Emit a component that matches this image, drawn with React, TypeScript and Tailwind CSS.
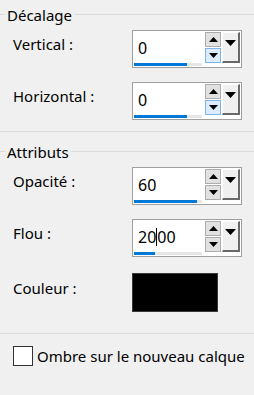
import React from "react";

type SpinProps = {
  value: React.ReactNode;
  fill: number;
  downActive?: boolean;
};

const Tri = ({ dir, w = 9, h = 5 }: { dir: "up" | "down"; w?: number; h?: number }) => (
  <svg width={w} height={h} viewBox={`0 0 ${w} ${h}`}>
    {dir === "up" ? (
      <polygon points={`0,${h} ${w},${h} ${w / 2},0`} fill="#000" />
    ) : (
      <polygon points={`0,0 ${w},0 ${w / 2},${h}`} fill="#000" />
    )}
  </svg>
);

const Spin: React.FC<SpinProps> = ({ value, fill, downActive }) => (
  <div className="flex w-[110px] h-[38px] border border-[#a0a0a0] bg-white">
    <div className="relative w-[72px]">
      <div className="pl-[5px] pt-[7px] text-[16px] leading-[20px] flex items-center">{value}</div>
      <div className="absolute left-[1px] top-[32px] h-[3px] w-[68px] bg-[#e6e6e6]">
        <div className="h-full bg-[#0078d7]" style={{ width: fill }} />
      </div>
    </div>
    <div className="flex flex-col w-[16px] pt-[1px] gap-[1px]">
      <div className="h-[15px] border border-[#adadad] bg-[#e1e1e1] flex items-center justify-center">
        <Tri dir="up" w={9} h={5} />
      </div>
      <div
        className={
          downActive
            ? "h-[15px] border border-[#7eb4ea] bg-[#dcecfc] flex items-center justify-center"
            : "h-[15px] border border-[#adadad] bg-[#e1e1e1] flex items-center justify-center"
        }
      >
        <Tri dir="down" w={9} h={5} />
      </div>
    </div>
    <div className="ml-[1px] mt-[1px] w-[18px] h-[31px] bg-[#f0f0f0] border-t border-l border-t-white border-l-white border-r-2 border-b-2 border-r-[#696969] border-b-[#696969] flex justify-center pt-[7px]">
      <Tri dir="down" w={11} h={6} />
    </div>
  </div>
);

const Header = ({ title }: { title: string }) => (
  <div className="flex items-start">
    <div className="w-[5px] h-px mt-[9px] bg-[#dcdcdc]" />
    <span className="px-[2px] leading-[20px]">{title}</span>
    <div className="flex-1 h-px mt-[9px] bg-[#dcdcdc]" />
  </div>
);

const Row = ({ label, children }: { label: string; children: React.ReactNode }) => (
  <div className="flex">
    <div className="w-[132px] pl-[13px] pt-[4px] leading-[20px]">{label}</div>
    {children}
  </div>
);

export default function App() {
  return (
    <div
      className="w-[254px] h-[395px] bg-[#f0f0f0] text-[15px] text-black overflow-hidden pt-[5px]"
      style={{ fontFamily: '"Noto Sans", "Open Sans", sans-serif' }}
    >
      <Header title="Décalage" />
      <div className="mt-[5px]">
        <Row label="Vertical :">
          <Spin value="0" fill={53} downActive />
        </Row>
      </div>
      <div className="mt-[14px]">
        <Row label="Horizontal :">
          <Spin value="0" fill={53} downActive />
        </Row>
      </div>
      <div className="mt-[11px] h-px bg-[#dcdcdc]" />
      <div className="mt-[10px]">
        <Header title="Attributs" />
      </div>
      <div className="mt-[5px]">
        <Row label="Opacité :">
          <Spin value="60" fill={63} />
        </Row>
      </div>
      <div className="mt-[14px]">
        <Row label="Flou :">
          <Spin
            value={
              <>
                <span>20</span>
                <span className="inline-block w-px h-[18px] bg-black" />
                <span>00</span>
              </>
            }
            fill={21}
          />
        </Row>
      </div>
      <div className="mt-[16px] flex">
        <div className="w-[132px] pl-[13px] pt-[5px] leading-[20px]">Couleur :</div>
        <div className="w-[86px] h-[39px] bg-black border border-[#3a3a3a]" />
      </div>
      <div className="mt-[21px] h-px bg-[#dcdcdc]" />
      <div className="mt-[12px] flex items-center pl-[13px] gap-[4px]">
        <div className="w-[20px] h-[20px] bg-white border border-[#333333]" />
        <span className="text-[15px] leading-[20px] whitespace-nowrap">Ombre sur le nouveau calque</span>
      </div>
    </div>
  );
}
